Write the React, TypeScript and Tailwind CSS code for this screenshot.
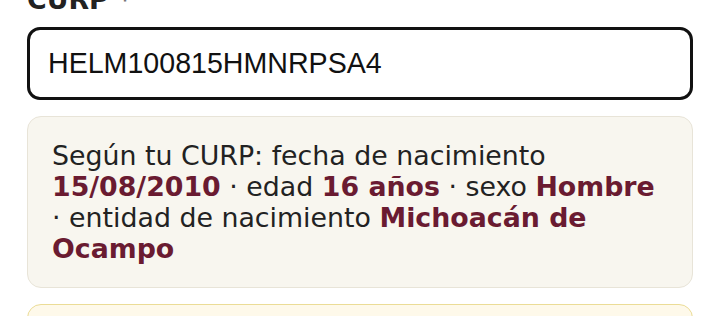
export default function App() {
  return (
    <div className="min-h-screen overflow-hidden bg-white px-[27px] font-['DejaVu_Sans',sans-serif] text-[26.8px] leading-[31px] text-[#222]">
      <div className="-mt-[16px]">
        <label htmlFor="curp" className="mb-3 block font-bold text-[#222]">
          CURP <span className="text-[#777]">*</span>
        </label>
        <input
          id="curp"
          readOnly
          value="HELM100815HMNRPSA4"
          className="block h-[73px] w-full rounded-[13px] border-[3px] border-[#111] bg-white px-[18px] font-['Liberation_Sans',Arial,sans-serif] text-[28.6px] text-[#111] outline-none"
        />

        <div className="mt-4 rounded-[14px] border border-[#e8e4d8] bg-[#f8f6ef] px-6 py-[23px]">
          <p>
            Según tu CURP: fecha de nacimiento{" "}
            <strong className="text-[#6a1b31]">15/08/2010</strong> · edad{" "}
            <strong className="text-[#6a1b31]">16 años</strong> · sexo{" "}
            <strong className="text-[#6a1b31]">Hombre</strong> · entidad de nacimiento{" "}
            <strong className="text-[#6a1b31]">Michoacán de Ocampo</strong>
          </p>
        </div>

        <div className="mt-4 h-[80px] rounded-[14px] border border-[#ebdc96] bg-[#fef9ea]" />
      </div>
    </div>
  );
}
